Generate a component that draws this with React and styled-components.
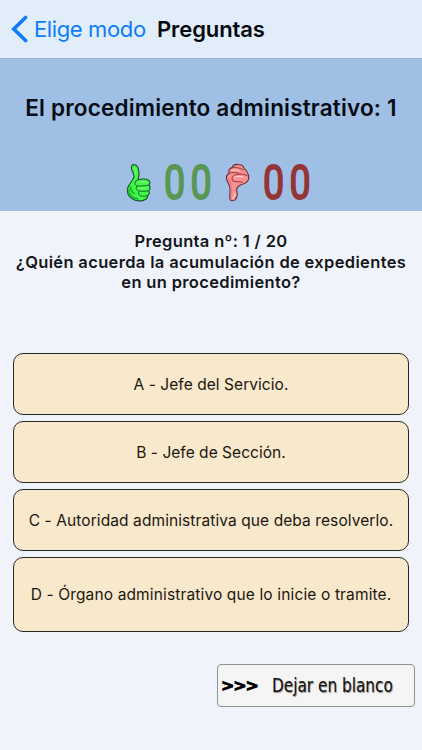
import React from "react";
import styled, { createGlobalStyle } from "styled-components";

const GlobalStyle = createGlobalStyle`
  * { box-sizing: border-box; }
  body { margin: 0; background: #f0f4fa; font-family: Inter, "Liberation Sans", sans-serif; }
  button { font-family: inherit; color: inherit; padding: 0; margin: 0; }
`;

const Screen = styled.main`
  display: flex;
  flex-direction: column;
  width: 422px;
  height: 750px;
  overflow: hidden;
  background: #f0f4fa;
  color: #14161a;
`;

const NavBar = styled.header`
  display: flex;
  align-items: center;
  height: 59px;
  padding: 0 0 0 11px;
  background: #e1edf9;
  border-bottom: 1px solid #9bb4d3;
`;

const BackButton = styled.button`
  display: flex;
  align-items: center;
  gap: 6px;
  border: 0;
  background: none;
  color: #0c7cf8;
  font-size: 22px;
  letter-spacing: -0.38px;
  white-space: nowrap;
  width: 146px;
`;

const NavTitle = styled.h1`
  margin: 0;
  font-size: 22px;
  font-weight: 600;
  letter-spacing: -0.1px;
  color: #05080c;
`;

const Summary = styled.section`
  display: flex;
  flex-direction: column;
  height: 152px;
  padding-top: 33px;
  background: #a0bfe5;
`;

const Topic = styled.h2`
  margin: 0;
  height: 32px;
  line-height: 32px;
  font-size: 22.5px;
  font-weight: 560;
  letter-spacing: 0.18px;
  text-align: center;
  white-space: nowrap;
  color: #050c14;
`;

const Scores = styled.div`
  display: flex;
  align-items: center;
  height: 40px;
  margin-top: 39px;
  padding-left: 125px;
`;

const Digits = styled.span`
  display: block;
  width: ${(p) => p.$width}px;
  padding-left: ${(p) => p.$inset}px;
  font: 400 49px/42px "Roboto", sans-serif;
  color: ${(p) => p.$color};
  -webkit-text-stroke: 1.8px ${(p) => p.$color};
  letter-spacing: 7px;
  white-space: nowrap;
  & > span { display: inline-block; transform: scaleX(0.77); transform-origin: left; }
`;

const Question = styled.section`
  height: 142px;
  padding-top: 20px;
  text-align: center;
  font-size: 16.5px;
  line-height: 20.7px;
  font-weight: 600;
`;

const Line = styled.div`
  white-space: nowrap;
  letter-spacing: 0.34px;
`;

const Answers = styled.section`
  display: flex;
  flex-direction: column;
  gap: 6px;
  padding: 0 13px;
`;

const Answer = styled.button`
  height: ${(p) => (p.$tall ? 75 : 62)}px;
  border: 1.4px solid #292723;
  border-radius: 10px;
  background: #f8e8cc;
  color: #1c1710;
  font-size: 15.5px;
  letter-spacing: ${(p) => p.$spacing}px;
  white-space: nowrap;
`;

const Footer = styled.footer`
  display: flex;
  justify-content: flex-end;
  padding: 32px 7px 0 0;
`;

const SkipButton = styled.button`
  display: flex;
  align-items: center;
  width: 198px;
  height: 43px;
  border: 1px solid #8f9194;
  border-radius: 4px;
  background: #f5f5f5;
  color: #101010;
`;

const Arrows = styled.span`
  display: block;
  flex: none;
  width: 51px;
  margin-left: 3px;
  text-align: left;
  font: 700 16px/41px "DejaVu Sans", sans-serif;
  letter-spacing: -1.1px;
  color: #000;
  -webkit-text-stroke: 0.8px #000;
`;

const SkipLabel = styled.span`
  display: block;
  flex: none;
  white-space: nowrap;
  font: 400 20.3px/43px "DejaVu Sans", sans-serif;
  transform: scaleX(0.755);
  transform-origin: left;
  text-shadow: 1px 1px 1px #8a8a8a;
`;

function Chevron() {
  return (
    <svg width="17" height="28" viewBox="0 0 17 28" fill="none">
      <path d="M14.6 2.5 2.8 14l11.8 11.5" stroke="#0c7cf8" strokeWidth="3.6" strokeLinecap="round" strokeLinejoin="miter" />
    </svg>
  );
}

function ThumbUp() {
  return (
    <svg width="28" height="40" viewBox="0 0 28 40" strokeLinejoin="round" strokeLinecap="round">
      <path
        d="M7 2.5C8.5.8 11.4 1.7 12.8 4.5c1.7 3.5 1.5 7.5.4 12.2 3.2-.9 8-.8 10.3.5 2 1.2 1.8 3.8.4 4.9 1.8 1.7 1.7 4.2-.3 5.6 1.2 1.8.8 4-1.1 5.1.2 2.3-1.5 4.1-5 4.8-4.3.8-8.7-.5-11.5-2.8-3.1-2.5-4.1-6-3.4-9.5.8-4 5.7-7.7 6.3-11.4C9.400 10 6 7.500 6.400 4.600Z"
        fill="#43f64b" stroke="#14531d" strokeWidth="1.1"
      />
      <path d="M3.5 27c.5 4.800 3.700 8 9.100 9M5.500 24c.2 3 1.500 5.200 3.500 6.200" fill="none" stroke="#21b832" strokeWidth="2" />
      <path d="M13.200 16.700c-2 .4-3.300 1.800-3.300 3.500 0 2 2 3 4.200 2.900 3.300 0 6.200-.2 9.800-1M12 23.300c-1.600 2-.5 4.200 2.200 4.700 3.100.5 6.500.5 9.400-.3M14 28.500c-1.200 1.800-.4 3.700 1.700 4.300 2.200.6 4.500.5 6.800 0" fill="none" stroke="#176c26" strokeWidth="1" />
      <path d="M9.200 4.200c1.500 1.500 1.700 3.500 1.500 6M14.500 19.500c2.500-1 4.500-1 6.500-.5M15 25.200c2-.4 4-.4 6 0" fill="none" stroke="#9cff98" strokeWidth="1" />
    </svg>
  );
}

function ThumbDown() {
  return (
    <svg width="28" height="40" viewBox="0 0 28 40" strokeLinejoin="round" strokeLinecap="round">
      <path
        d="M2.5 16C2 13 3 11.300 5.200 10.200 4.200 7.500 5.500 5.200 8 4.600 9.300 1.900 12.300 1 15 1.800c2.900-.3 4.500 1.200 4.800 3.300 2.900 2.500 4.700 5.800 4.900 9 .2 3.900-1.900 6.200-6.900 7.400-3.200 1-5.300 3.400-5.200 6.300 1.300 3.900.3 7.200-1.600 9-1.900 1.700-5.100 1.200-5.100-1.400-.3-3.600.3-7 .1-10.500-.3-3-2.500-5.200-3.500-8.900Z"
        fill="#f98f8f" stroke="#673239" strokeWidth="1.1"
      />
      <path d="M5.200 10.200c3.500-1.200 7-.9 9.800.3M8 4.600c4-.5 8 .2 11 2.200M9 18c-2-2.600-.8-5.600 2.600-6.300 4.500-1 9-.8 11.500 1M9 18c3 1.300 6 .4 9.500 1.300" fill="none" stroke="#8d3e46" strokeWidth="1" />
      <path d="M8 7.500c2-.7 4.500-.6 7 .3M8.500 35c1.800-.7 2.500-2.500 2.400-5M11.500 14c2.500-1 5-.8 7.500 0" fill="none" stroke="#ffd0cb" strokeWidth="1.200" />
      <path d="M5 16c2 5 2.700 9 2.200 16" fill="none" stroke="#e87984" strokeWidth="1.200" />
    </svg>
  );
}

const answers = [
  { text: "A - Jefe del Servicio.", spacing: 0.06 },
  { text: "B - Jefe de Sección.", spacing: 0.03 },
  { text: "C - Autoridad administrativa que deba resolverlo.", spacing: 0.09 },
  { text: "D - Órgano administrativo que lo inicie o tramite.", spacing: 0.14, tall: true },
];

export default function App() {
  return (
    <>
      <GlobalStyle />
      <Screen>
        <NavBar>
          <BackButton><Chevron />Elige modo</BackButton>
          <NavTitle>Preguntas</NavTitle>
        </NavBar>
        <Summary>
          <Topic>El procedimiento administrativo: 1</Topic>
          <Scores>
            <ThumbUp />
            <Digits $color="#5a9653" $width={71} $inset={11}><span>00</span></Digits>
            <ThumbDown />
            <Digits $color="#933536" $width={71} $inset={11}><span>00</span></Digits>
          </Scores>
        </Summary>
        <Question>
          <Line>Pregunta nº: 1 / 20</Line>
          <Line>¿Quién acuerda la acumulación de expedientes</Line>
          <Line>en un procedimiento?</Line>
        </Question>
        <Answers>
          {answers.map((a) => (
            <Answer key={a.text} $tall={a.tall} $spacing={a.spacing}>{a.text}</Answer>
          ))}
        </Answers>
        <Footer>
          <SkipButton>
            <Arrows>&gt;&gt;&gt;</Arrows>
            <SkipLabel>Dejar en blanco</SkipLabel>
          </SkipButton>
        </Footer>
      </Screen>
    </>
  );
}
